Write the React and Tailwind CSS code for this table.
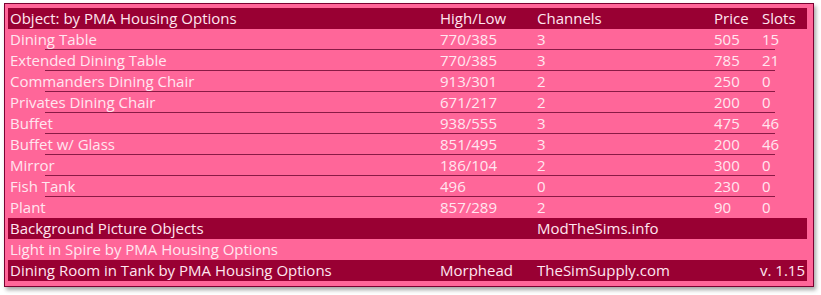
const rows = [
  ["Dining Table", "770/385", "3", "505", "15"],
  ["Extended Dining Table", "770/385", "3", "785", "21"],
  ["Commanders Dining Chair", "913/301", "2", "250", "0"],
  ["Privates Dining Chair", "671/217", "2", "200", "0"],
  ["Buffet", "938/555", "3", "475", "46"],
  ["Buffet w/ Glass", "851/495", "3", "200", "46"],
  ["Mirror", "186/104", "2", "300", "0"],
  ["Fish Tank", "496", "0", "230", "0"],
  ["Plant", "857/289", "2", "90", "0"],
];

const cols = "grid grid-cols-[430px_97px_177px_48px_1fr] pl-[2px] items-center";

function App() {
  return (
    <div
      className="w-[821px] h-[295px] bg-white pt-[3px] pl-[4px] text-[15px] leading-none text-[#ffe6f0]"
      style={{ fontFamily: '"Open Sans", "Noto Sans", sans-serif' }}
    >
      <div className="w-[810px] h-[284px] border border-[#7a0030] bg-[#ff6699] pt-[4px] pl-[3px] pr-[6px] shadow-[2px_3px_4px_rgba(0,0,0,0.35)]">
        <div className={cols + " h-[21px] bg-[#990033]"}>
          <span>Object: by PMA Housing Options</span>
          <span>High/Low</span>
          <span>Channels</span>
          <span>Price</span>
          <span>Slots</span>
        </div>
        {rows.map((r, i) => (
          <div key={r[0]}>
            <div className={cols + " h-[20px]"}>
              {r.map((c, j) => (
                <span key={j}>{c}</span>
              ))}
            </div>
            {i < rows.length - 1 ? (
              <div className="ml-[37px] w-[730px] h-px bg-[#8a1a45]" />
            ) : (
              <div className="h-px" />
            )}
          </div>
        ))}
        <div className={cols + " h-[21px] bg-[#990033]"}>
          <span>Background Picture Objects</span>
          <span></span>
          <span className="col-span-3">ModTheSims.info</span>
        </div>
        <div className="h-[21px] flex items-center pl-[2px]">
          Light in Spire by PMA Housing Options
        </div>
        <div className="grid grid-cols-[430px_97px_1fr] pl-[2px] pr-[2px] items-center h-[21px] bg-[#990033]">
          <span>Dining Room in Tank by PMA Housing Options</span>
          <span>Morphead</span>
          <span className="flex justify-between">
            <span>TheSimSupply.com</span>
            <span>v. 1.15</span>
          </span>
        </div>
      </div>
    </div>
  );
}

export default App;
